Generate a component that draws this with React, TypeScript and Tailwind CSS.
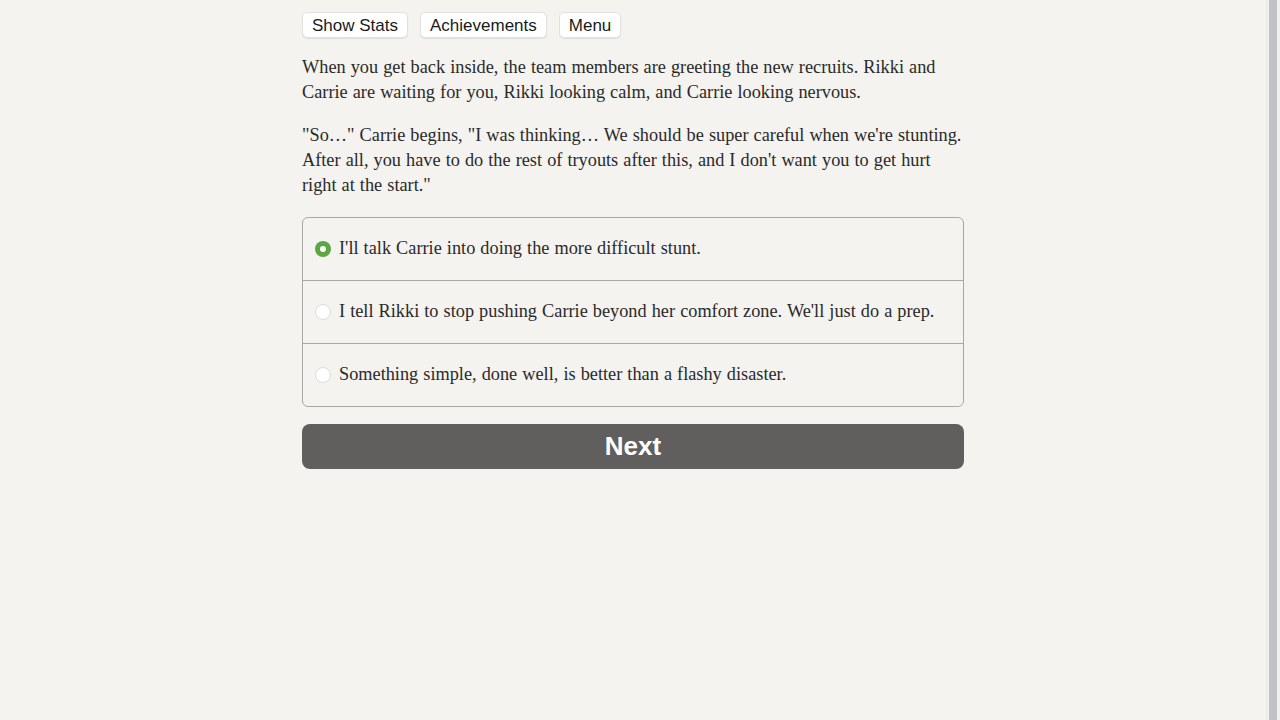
import { useState } from "react";

const choices = [
  "I'll talk Carrie into doing the more difficult stunt.",
  "I tell Rikki to stop pushing Carrie beyond her comfort zone. We'll just do a prep.",
  "Something simple, done well, is better than a flashy disaster.",
];

const serif = "font-['Palatino_Linotype','Book_Antiqua','Liberation_Serif',serif]";
const sans = "font-['Liberation_Sans',Arial,sans-serif]";

const App = () => {
  const [picked, setPicked] = useState(0);

  return (
    <div className="flex h-[720px] w-[1280px] overflow-hidden bg-[#f4f3f0]">
      <main className="flex flex-1 justify-center">
        <div className="w-[662px] pt-3">
          {/* top buttons */}
          <div className={`flex gap-3 ${sans}`}>
            {["Show Stats", "Achievements", "Menu"].map((label) => (
              <button
                key={label}
                className="h-[26px] rounded-[5px] border border-[#e2e1dd] bg-white px-[9px] text-[17px] leading-none text-[#1a1a1a] shadow-[0_1px_1px_rgba(0,0,0,0.08)]"
              >
                {label}
              </button>
            ))}
          </div>

          <div className={`mt-[17px] text-[18.3px] leading-[25px] text-[#2a2a2a] [word-spacing:0.5px] ${serif}`}>
            <p>
              When you get back inside, the team members are greeting the new recruits. Rikki and Carrie are waiting
              for you, Rikki looking calm, and Carrie looking nervous.
            </p>
            <p className="mt-[18px]">
              "So…" Carrie begins, "I was thinking… We should be super careful when we're stunting. After all, you have
              to do the rest of tryouts after this, and I don't want you to get hurt right at the start."
            </p>
          </div>

          {/* choices */}
          <div className={`mt-[19px] overflow-hidden rounded-[6px] border border-[#a8a8a6] [word-spacing:0.5px] ${serif}`}>
            {choices.map((c, i) => (
              <label
                key={c}
                onClick={() => setPicked(i)}
                className={`flex h-[62px] cursor-pointer items-center gap-[8px] px-[12px] text-[18.3px] text-[#2a2a2a] ${
                  i > 0 ? "h-[63px] border-t border-[#a8a8a6]" : ""
                }`}
              >
                {picked === i ? (
                  <span className="flex h-[16px] w-[16px] shrink-0 items-center justify-center rounded-full bg-[#5ba843]">
                    <span className="h-[6px] w-[6px] rounded-full bg-white" />
                  </span>
                ) : (
                  <span className="h-[16px] w-[16px] shrink-0 rounded-full border border-[#dcdcda] bg-white" />
                )}
                <span>{c}</span>
              </label>
            ))}
          </div>

          <button
            className={`mt-[17px] h-[45px] w-full rounded-[8px] bg-[#615f5d] text-[26px] font-bold text-white ${sans}`}
          >
            Next
          </button>
        </div>
      </main>

      {/* scrollbar */}
      <div className="flex w-[14px] border-l border-[#e6e6e3] bg-[#f1f1ef] pl-[2px]">
        <div className="w-[8px] bg-[#c2c2c4]" />
      </div>
    </div>
  );
};

export default App;
